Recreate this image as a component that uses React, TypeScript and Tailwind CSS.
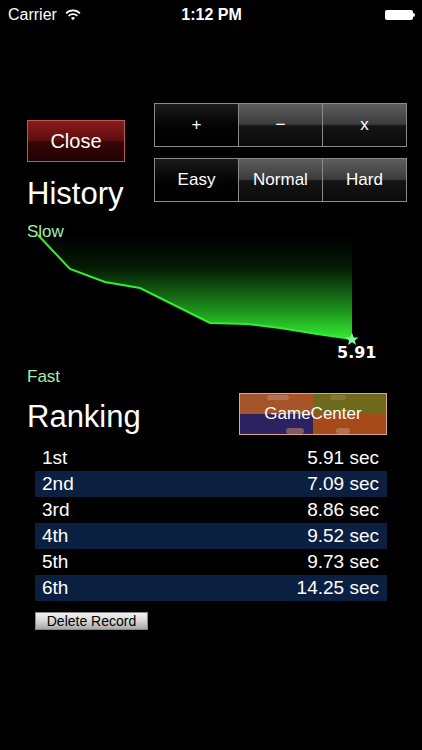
import React from 'react'

const font = { fontFamily: '"Liberation Sans", Arial, sans-serif' }

const StatusBar = () => (
  <div className="h-[30px] flex items-center justify-between pl-[8px] pr-[7px] text-white text-[16px]">
    <div className="flex items-center gap-[8px] w-[110px]">
      <span>Carrier</span>
      <svg width="16" height="12" viewBox="0 0 15 11">
        <path d="M1 4 A9 9 0 0 1 14 4" stroke="white" strokeWidth="1.6" fill="none" />
        <path d="M3.4 6.3 A6 6 0 0 1 11.6 6.3" stroke="white" strokeWidth="1.6" fill="none" />
        <path d="M7.5 10.5 L5.6 8.4 A2.7 2.7 0 0 1 9.4 8.4 Z" fill="white" />
      </svg>
    </div>
    <span className="font-semibold">1:12 PM</span>
    <div className="w-[110px] flex justify-end">
      <div className="flex items-center">
        <div className="w-[28px] h-[10px] rounded-[2px] bg-white" />
        <div className="w-[2px] h-[4px] bg-white rounded-r-sm" />
      </div>
    </div>
  </div>
)

const Seg = ({ label, on, first }: { label: string; on?: boolean; first?: boolean }) => (
  <div
    className={
      'flex-1 h-full flex items-center justify-center text-white text-[17px] border border-[#8a8a8a] ' +
      (first ? '' : '-ml-px ') +
      (on
        ? 'bg-gradient-to-b from-[#1c1c1c] to-[#000]'
        : 'bg-[linear-gradient(to_bottom,#5e5e5e_0%,#3c3c3c_48%,#141414_52%,#0a0a0a_100%)]')
    }
  >
    {label}
  </div>
)

const pts: [number, number][] = [
  [38, 235],
  [70, 269],
  [105, 282],
  [140, 288],
  [210, 323],
  [247, 324],
  [280, 328],
  [317, 334],
  [352, 339],
]

const Chart = () => {
  const line = pts.map(p => `${p[0]},${p[1] - 215}`).join(' ')
  const area = line + ` 352,20`
  return (
    <div className="relative h-[170px]">
      <svg className="absolute left-0 top-0" width="422" height="170">
        <defs>
          <linearGradient id="g" x1="0" y1="0" x2="0" y2="1">
            <stop offset="0" stopColor="#22cc22" stopOpacity="0" />
            <stop offset="0.3" stopColor="#22cc22" stopOpacity="0.12" />
            <stop offset="1" stopColor="#33ee33" stopOpacity="1" />
          </linearGradient>
        </defs>
        <polygon points={area} fill="url(#g)" />
        <polyline points={line} fill="none" stroke="#33ee33" strokeWidth="2" />
        <polygon
          points="352,118 353.8,122.5 358.5,122.6 354.8,125.5 356.1,130 352,127.3 347.9,130 349.2,125.5 345.5,122.6 350.2,122.5"
          fill="#7dff9a"
        />
      </svg>
      <div className="absolute left-[27px] top-[4px] text-[#a8eba8] text-[17px]">Slow</div>
      <div
        className="absolute left-[337px] top-[126px] text-white text-[16px] font-bold"
        style={{ fontFamily: '"DejaVu Sans", Verdana, sans-serif' }}
      >
        5.91
      </div>
      <div className="absolute left-[27px] top-[149px] text-[#a8eba8] text-[17px]">Fast</div>
    </div>
  )
}

const ranks = [
  ['1st', '5.91 sec'],
  ['2nd', '7.09 sec'],
  ['3rd', '8.86 sec'],
  ['4th', '9.52 sec'],
  ['5th', '9.73 sec'],
  ['6th', '14.25 sec'],
]

const App = () => {
  return (
    <div className="w-[422px] h-[750px] bg-black overflow-hidden" style={font}>
      <StatusBar />
      <div className="flex pl-[27px] pr-[15px] pt-[73px] h-[185px]">
        <div className="w-[127px]">
          <div className="mt-[17px] w-[98px] h-[42px] border border-[#b85a5a] bg-[linear-gradient(to_bottom,#8a1c1c_0%,#5e0d0d_48%,#3a0505_52%,#1e0202_100%)] flex items-center justify-center text-white text-[20px]">
            Close
          </div>
          <div className="mt-[14px] text-white text-[31px] leading-[36px]">History</div>
        </div>
        <div className="flex-1 flex flex-col gap-[11px]">
          <div className="flex h-[44px]">
            <Seg label="+" on first />
            <Seg label="−" />
            <Seg label="x" />
          </div>
          <div className="flex h-[44px]">
            <Seg label="Easy" on first />
            <Seg label="Normal" />
            <Seg label="Hard" />
          </div>
        </div>
      </div>
      <Chart />
      <div className="flex items-start justify-between pl-[27px] pr-[35px] mt-[8px]">
        <div className="mt-[6px] text-white text-[31px] leading-[36px]">Ranking</div>
        <div className="relative w-[148px] h-[42px] border border-[#d9a888] overflow-hidden grid grid-cols-2 grid-rows-2">
          <div className="bg-[#a8542a]" />
          <div className="bg-[#6e6a1c]" />
          <div className="bg-[#2c2262]" />
          <div className="bg-[#a64a1c]" />
          <div className="absolute left-[27px] top-[1px] w-[22px] h-[5px] rounded-full bg-[#b98068] opacity-70" />
          <div className="absolute left-[90px] top-[1px] w-[16px] h-[5px] rounded-full bg-[#9a8050] opacity-60" />
          <div className="absolute left-[46px] top-[34px] w-[18px] h-[6px] rounded-full bg-[#b98068] opacity-60" />
          <div className="absolute left-[96px] top-[34px] w-[14px] h-[6px] rounded-full bg-[#c08a6e] opacity-60" />
          <div className="absolute inset-0 flex items-center justify-center text-white text-[17px]">GameCenter</div>
        </div>
      </div>
      <div className="mt-[10px] ml-[35px] w-[352px]">
        {ranks.map((r, i) => (
          <div
            key={r[0]}
            className={
              'h-[26px] flex items-center justify-between pl-[7px] pr-[8px] text-white text-[19px] ' +
              (i % 2 === 1 ? 'bg-[#0b2040]' : '')
            }
          >
            <span>{r[0]}</span>
            <span>{r[1]}</span>
          </div>
        ))}
      </div>
      <div className="mt-[11px] ml-[35px] w-[113px] h-[18px] border border-[#888] bg-[linear-gradient(to_bottom,#f2f2f2_0%,#d6d6d6_50%,#a8a8a8_100%)] flex items-center justify-center text-black text-[14px]">
        Delete Record
      </div>
    </div>
  )
}

export default App
